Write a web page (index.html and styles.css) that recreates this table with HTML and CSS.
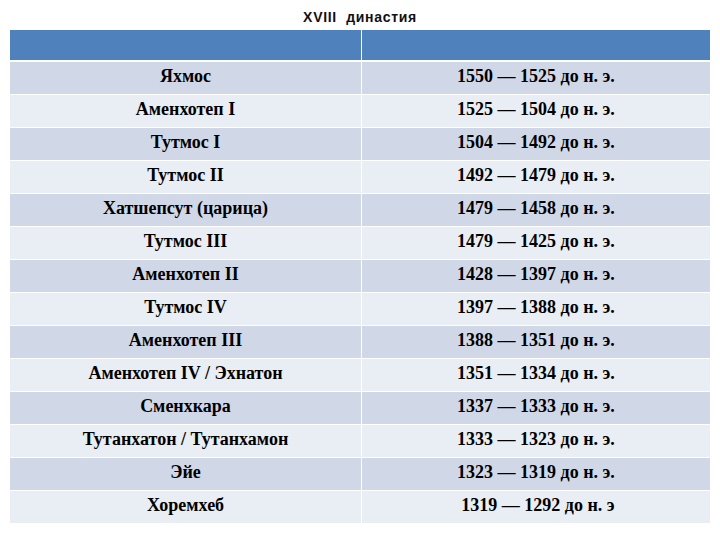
FILE: index.html
```html
<!DOCTYPE html>
<html lang="ru">
<head>
<meta charset="utf-8">
<link rel="stylesheet" href="styles.css">
</head>
<body>
<div class="slide">
  <h1 class="title">XVIII&nbsp; династия</h1>
  <table class="dyn">
    <thead>
      <tr><th class="c1"></th><th class="c2"></th></tr>
    </thead>
    <tbody>
      <tr><td>Яхмос</td><td>1550 — 1525 до н. э.</td></tr>
      <tr><td>Аменхотеп I</td><td>1525 — 1504 до н. э.</td></tr>
      <tr><td>Тутмос I</td><td>1504 — 1492 до н. э.</td></tr>
      <tr><td>Тутмос II</td><td>1492 — 1479 до н. э.</td></tr>
      <tr><td>Хатшепсут (царица)</td><td>1479 — 1458 до н. э.</td></tr>
      <tr><td>Тутмос III</td><td>1479 — 1425 до н. э.</td></tr>
      <tr><td>Аменхотеп II</td><td>1428 — 1397 до н. э.</td></tr>
      <tr><td>Тутмос IV</td><td>1397 — 1388 до н. э.</td></tr>
      <tr><td>Аменхотеп III</td><td>1388 — 1351 до н. э.</td></tr>
      <tr><td>Аменхотеп IV / Эхнатон</td><td>1351 — 1334 до н. э.</td></tr>
      <tr><td>Сменхкара</td><td>1337 — 1333 до н. э.</td></tr>
      <tr><td>Тутанхатон / Тутанхамон</td><td>1333 — 1323 до н. э.</td></tr>
      <tr><td>Эйе</td><td>1323 — 1319 до н. э.</td></tr>
      <tr><td>Хоремхеб</td><td class="last">1319 — 1292 до н. э</td></tr>
    </tbody>
  </table>
</div>
</body>
</html>
```
FILE: styles.css
```css
html, body {
  margin: 0;
  padding: 0;
  background: #ffffff;
}
.slide {
  width: 720px;
  height: 540px;
  position: relative;
}
.title {
  margin: 0;
  height: 30px;
  line-height: 34px;
  text-align: center;
  font-family: "Liberation Sans", Arial, sans-serif;
  font-weight: bold;
  font-size: 14px;
  letter-spacing: 0.7px;
  color: #111111;
}
.dyn {
  margin-left: 9px;
  width: 702px;
  border-collapse: collapse;
  table-layout: fixed;
  font-family: "Liberation Serif", "Times New Roman", serif;
  font-weight: bold;
  font-size: 18px;
  color: #000000;
}
.dyn th {
  background: #4f81bd;
  height: 31px;
  padding: 0;
  box-sizing: border-box;
  border: 1px solid #ffffff;
  border-top: none;
  border-bottom-width: 2px;
}
.dyn th.c1 { width: 352px; }
.dyn td {
  height: 33px;
  padding: 0 0 3px 0;
  box-sizing: border-box;
  text-align: center;
  vertical-align: middle;
  border: 1px solid #ffffff;
}
.dyn tbody tr:nth-child(odd) td { background: #d0d8e8; }
.dyn tbody tr:nth-child(even) td { background: #e9edf4; }
.dyn td.last { padding-left: 4px; }
```
